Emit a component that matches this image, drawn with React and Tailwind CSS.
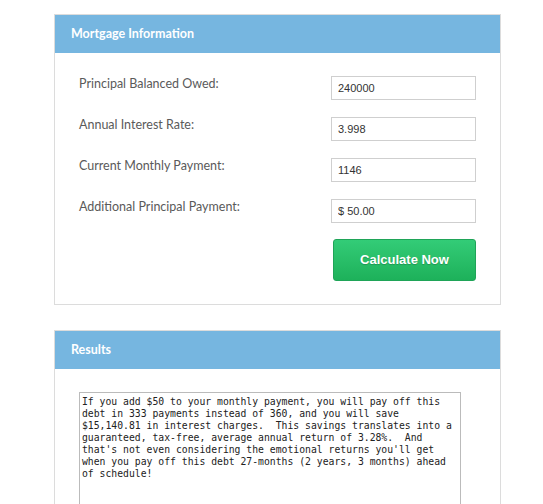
import React from 'react';

const fields = [
  { label: 'Principal Balanced Owed:', value: '240000' },
  { label: 'Annual Interest Rate:', value: '3.998' },
  { label: 'Current Monthly Payment:', value: '1146' },
  { label: 'Additional Principal Payment:', value: '$ 50.00' },
];

const resultText =
  "If you add $50 to your monthly payment, you will pay off this\n" +
  "debt in 333 payments instead of 360, and you will save\n" +
  "$15,140.81 in interest charges.  This savings translates into a\n" +
  "guaranteed, tax-free, average annual return of 3.28%.  And\n" +
  "that's not even considering the emotional returns you'll get\n" +
  "when you pay off this debt 27-months (2 years, 3 months) ahead\n" +
  "of schedule!";

function PanelHeader({ title }) {
  return (
    <div className="h-[38px] bg-[#76b6e0] flex items-center px-[16px] text-white font-bold text-[12.5px] font-['Lato',sans-serif]">
      {title}
    </div>
  );
}

export default function App() {
  return (
    <div className="min-h-screen bg-white pl-[54px] pt-[14px] pb-8">
      <div className="w-[447px] flex flex-col gap-[25px]">
        <div className="border border-[#dcdcdc]">
          <PanelHeader title="Mortgage Information" />
          <div className="px-[24px] pt-[23px] pb-[23px] flex flex-col">
            <div className="flex flex-col gap-[17px]">
              {fields.map((f) => (
                <div key={f.label} className="flex justify-between items-start">
                  <span className="text-[12.5px] leading-[18px] text-[#5a5a5a] font-['Lato',sans-serif] -mt-[1px]">
                    {f.label}
                  </span>
                  <input
                    type="text"
                    defaultValue={f.value}
                    className="w-[145px] h-[24px] border border-[#cfcfcf] px-[6px] text-[11px] text-[#333] font-['Liberation_Sans',Arial,sans-serif] outline-none"
                  />
                </div>
              ))}
            </div>
            <div className="flex justify-end mt-[16px]">
              <button className="w-[143px] h-[42px] rounded-[3px] border border-[#1fa458] bg-gradient-to-b from-[#33cc77] to-[#1db15a] text-white font-bold text-[13px] font-['Liberation_Sans',Arial,sans-serif] [text-shadow:0_1px_1px_rgba(0,0,0,0.2)]">
                Calculate Now
              </button>
            </div>
          </div>
        </div>

        <div className="border border-[#dcdcdc]">
          <PanelHeader title="Results" />
          <div className="px-[24px] pt-[23px] pb-[20px]">
            <textarea
              readOnly
              wrap="off"
              defaultValue={resultText}
              className="w-[382px] h-[130px] border border-[#bbb] px-[2px] pt-[3px] resize-none overflow-hidden outline-none text-[9.75px] leading-[12px] text-[#222] font-['DejaVu_Sans_Mono',monospace]"
            />
          </div>
        </div>
      </div>
    </div>
  );
}
